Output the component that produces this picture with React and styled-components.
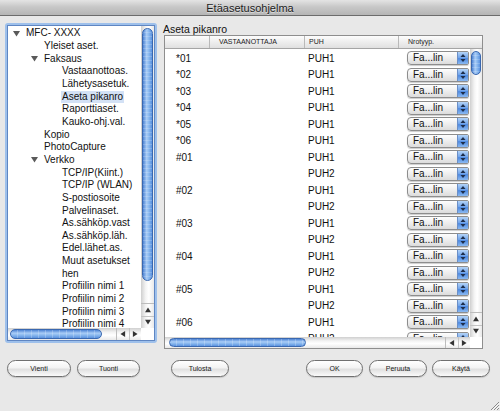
import React from "react"
import styled, { createGlobalStyle } from "styled-components"

const GlobalStyle = createGlobalStyle`
  body {
    margin: 0;
    font-family: "Liberation Sans", Arial, sans-serif;
    color: #111;
  }
`

const treeData = [
  { label: "MFC- XXXX", level: 0, open: true },
  { label: "Yleiset aset.", level: 1 },
  { label: "Faksaus", level: 1, open: true },
  { label: "Vastaanottoas.", level: 2 },
  { label: "Lähetysasetuk.", level: 2 },
  { label: "Aseta pikanro", level: 2, selected: true },
  { label: "Raporttiaset.", level: 2 },
  { label: "Kauko-ohj.val.", level: 2 },
  { label: "Kopio", level: 1 },
  { label: "PhotoCapture", level: 1 },
  { label: "Verkko", level: 1, open: true },
  { label: "TCP/IP(Kiint.)", level: 2 },
  { label: "TCP/IP (WLAN)", level: 2 },
  { label: "S-postiosoite", level: 2 },
  { label: "Palvelinaset.", level: 2 },
  { label: "As.sähköp.vast", level: 2 },
  { label: "As.sähköp.läh.", level: 2 },
  { label: "Edel.lähet.as.", level: 2 },
  { label: "Muut asetukset", level: 2 },
  { label: "hen", level: 2 },
  { label: "Profiilin nimi 1", level: 2 },
  { label: "Profiilin nimi 2", level: 2 },
  { label: "Profiilin nimi 3", level: 2 },
  { label: "Profiilin nimi 4", level: 2 },
]

const rows = [
  ["*01", "PUH1"],
  ["*02", "PUH1"],
  ["*03", "PUH1"],
  ["*04", "PUH1"],
  ["*05", "PUH1"],
  ["*06", "PUH1"],
  ["#01", "PUH1"],
  ["", "PUH2"],
  ["#02", "PUH1"],
  ["", "PUH2"],
  ["#03", "PUH1"],
  ["", "PUH2"],
  ["#04", "PUH1"],
  ["", "PUH2"],
  ["#05", "PUH1"],
  ["", "PUH2"],
  ["#06", "PUH1"],
  ["", "PUH2"],
]

const Tri = ({ dir = "down", size = 7, color = "#555" }) => {
  const pts = {
    down: "0,1 7,1 3.5,6.5",
    up: "0,6 7,6 3.5,0.5",
    left: "6,0 6,7 0.5,3.5",
    right: "1,0 1,7 6.5,3.5",
  }
  return (
    <svg width={size} height={size} viewBox="0 0 7 7">
      <polygon points={pts[dir]} fill={color} />
    </svg>
  )
}

const Stepper = () => (
  <StepBox>
    <svg width="6" height="10" viewBox="0 0 6 10">
      <polygon points="0.5,4 5.5,4 3,1" fill="#1d2d4a" />
      <polygon points="0.5,6 5.5,6 3,9" fill="#1d2d4a" />
    </svg>
  </StepBox>
)

const Grip = () => (
  <GripBox>
    <svg width="11" height="11" viewBox="0 0 11 11">
      <path d="M10 2 L2 10 M10 5 L5 10 M10 8 L8 10" stroke="#8a8a8a" strokeWidth="1" />
      <path d="M10.8 2.8 L2.8 10.8 M10.8 5.8 L5.8 10.8" stroke="#fff" strokeWidth="0.8" />
    </svg>
  </GripBox>
)

const VScrollBar = ({ thumbTop, thumbHeight }) => (
  <VScroll>
    <VTrack>
      <VThumb $top={thumbTop} $h={thumbHeight} />
    </VTrack>
    <VArrows>
      <ArrowCell>
        <Tri dir="up" size={6} color="#333" />
      </ArrowCell>
      <ArrowCell $sep>
        <Tri dir="down" size={6} color="#333" />
      </ArrowCell>
    </VArrows>
  </VScroll>
)

const HScrollBar = ({ thumbLeft, thumbWidth }) => (
  <HScroll>
    <HTrack>
      <HThumb $left={thumbLeft} $w={thumbWidth} />
    </HTrack>
    <HArrows>
      <ArrowCell>
        <Tri dir="left" size={6} color="#333" />
      </ArrowCell>
      <ArrowCell $sep $h>
        <Tri dir="right" size={6} color="#333" />
      </ArrowCell>
    </HArrows>
  </HScroll>
)

const App = () => {
  return (
    <>
      <GlobalStyle />
      <Window>
        <TitleBar>Etäasetusohjelma</TitleBar>
        <Main>
          <FocusRing>
            <TreeBox>
              <TreeList>
                {treeData.map((item, index) => (
                  <TreeItem key={index} $level={item.level}>
                    <Toggle>{item.open && <Tri dir="down" size={7} color="#5a5a5a" />}</Toggle>
                    <TreeLabel $selected={item.selected}>{item.label}</TreeLabel>
                  </TreeItem>
                ))}
              </TreeList>
              <VScrollBar thumbTop={2} thumbHeight={253} />
              <HScrollBar thumbLeft={2} thumbWidth={92} />
              <Corner />
            </TreeBox>
          </FocusRing>

          <RightCol>
            <SectionLabel>Aseta pikanro</SectionLabel>
            <TableFrame>
              <Header>
                <HeadCell $pl={0} />
                <HeadCell $pl={9} $divider>VASTAANOTTAJA</HeadCell>
                <HeadCell $pl={4} $divider>PUH</HeadCell>
                <HeadCell $pl={9} $divider>Nrotyyp.</HeadCell>
              </Header>
              <TableBody>
                <Rows>
                  {rows.map((r, index) => (
                    <Row key={index}>
                      <Cell $pl={11}>{r[0]}</Cell>
                      <Cell />
                      <Cell $pl={4}>{r[1]}</Cell>
                      <Cell $pl={9}>
                        <Select>
                          <SelectText>Fa...lin</SelectText>
                          <Stepper />
                        </Select>
                      </Cell>
                    </Row>
                  ))}
                </Rows>
                <VScrollBar thumbTop={2} thumbHeight={24} />
                <HScrollBar thumbLeft={4} thumbWidth={137} />
                <Corner />
              </TableBody>
            </TableFrame>
          </RightCol>
        </Main>

        <ButtonRow>
          <Button $w={64}>Vienti</Button>
          <Button $w={63} $ml={6}>Tuonti</Button>
          <Button $w={58} $ml={31}>Tulosta</Button>
          <Spacer />
          <Button $w={57}>OK</Button>
          <Button $w={58} $ml={6}>Peruuta</Button>
          <Button $w={58} $ml={5}>Käytä</Button>
        </ButtonRow>
        <Grip />
      </Window>
    </>
  )
}

export default App

const Window = styled.div`
  width: 500px;
  height: 411px;
  background: #e8e8e8;
  position: relative;
  overflow: hidden;
`

const TitleBar = styled.div`
  height: 15px;
  border-bottom: 1px solid #6c6c6c;
  background: linear-gradient(#e4e4e4, #c8c8c8 45%, #b5b5b5);
  display: flex;
  align-items: center;
  justify-content: center;
  font-size: 11px;
  color: #222;
  text-shadow: 0 1px 0 rgba(255, 255, 255, 0.5);
`

const Main = styled.div`
  display: flex;
  gap: 6px;
  padding: 7px 0 0 5px;
  height: 326px;
`

const FocusRing = styled.div`
  width: 152px;
  height: 320px;
  box-sizing: border-box;
  padding: 2px;
  border-radius: 3px;
  background: #9ec0eb;
`

const TreeBox = styled.div`
  height: 100%;
  box-sizing: border-box;
  border: 1px solid #5f86c2;
  background: #fff;
  display: grid;
  grid-template-columns: 1fr 13px;
  grid-template-rows: 1fr 12px;
  overflow: hidden;
`

const TreeList = styled.ul`
  list-style: none;
  margin: 0;
  padding: 1px 0 0;
  overflow: hidden;
  font-size: 10px;
`

const TreeItem = styled.li`
  display: flex;
  align-items: center;
  height: 12.67px;
  padding-left: ${(p) => 5 + 18 * p.$level}px;
  white-space: nowrap;
`

const Toggle = styled.span`
  width: 13px;
  flex: none;
  display: flex;
  align-items: center;
`

const TreeLabel = styled.span`
  line-height: 12px;
  padding: 0 1px;
  margin-left: -1px;
  background: ${(p) => (p.$selected ? "#d3e1f5" : "transparent")};
`

const VScroll = styled.div`
  display: flex;
  flex-direction: column;
  background: linear-gradient(to right, #cfcfcf, #f3f3f3 35%, #fff 60%, #e9e9e9);
  min-height: 0;
`

const VTrack = styled.div`
  flex: 1;
  min-height: 0;
`

const VThumb = styled.div`
  margin: ${(p) => p.$top}px 1px 0;
  height: ${(p) => p.$h}px;
  box-sizing: border-box;
  border: 1px solid #3a68b0;
  border-radius: 6px;
  background:
    repeating-linear-gradient(180deg, transparent 0 3px, rgba(255, 255, 255, 0.18) 3px 4px),
    linear-gradient(to right, #4c83d4, #a9ccf6 40%, #8fbcf0 60%, #5a92df);
`

const VArrows = styled.div`
  height: 24px;
  display: flex;
  flex-direction: column;
  border-top: 1px solid #bdbdbd;
`

const ArrowCell = styled.div`
  flex: 1;
  display: flex;
  align-items: center;
  justify-content: center;
  ${(p) => p.$sep && (p.$h ? "border-left: 1px solid #c4c4c4;" : "border-top: 1px solid #c4c4c4;")}
`

const HScroll = styled.div`
  display: flex;
  background: linear-gradient(#cfcfcf, #f3f3f3 35%, #fff 60%, #e9e9e9);
  min-width: 0;
`

const HTrack = styled.div`
  flex: 1;
  display: flex;
  align-items: center;
  min-width: 0;
`

const HThumb = styled.div`
  margin-left: ${(p) => p.$left}px;
  width: ${(p) => p.$w}px;
  height: calc(100% - 2px);
  box-sizing: border-box;
  border: 1px solid #3a68b0;
  border-radius: 6px;
  background:
    repeating-linear-gradient(90deg, transparent 0 6px, rgba(255, 255, 255, 0.22) 6px 7px),
    linear-gradient(#4c83d4, #a9ccf6 40%, #8fbcf0 60%, #5a92df);
`

const HArrows = styled.div`
  width: 24px;
  display: flex;
  border-left: 1px solid #bdbdbd;
`

const Corner = styled.div`
  background: #fff;
`

const RightCol = styled.div`
  display: flex;
  flex-direction: column;
`

const SectionLabel = styled.div`
  height: 12px;
  line-height: 12px;
  font-size: 10.5px;
`

const TableFrame = styled.div`
  margin-left: 1px;
  width: 319px;
  height: 314px;
  box-sizing: border-box;
  border: 1px solid #8e8e8e;
  background: #fff;
  display: flex;
  flex-direction: column;
`

const Header = styled.div`
  display: grid;
  grid-template-columns: 44px 95px 94px 1fr;
  height: 13px;
  flex: none;
  box-sizing: border-box;
  border-bottom: 1px solid #a5a5a5;
  background: linear-gradient(#fdfdfd, #eeeeee 50%, #e0e0e0);
  font-size: 7px;
  color: #222;
`

const HeadCell = styled.div`
  line-height: 12px;
  padding-left: ${(p) => p.$pl}px;
  border-left: ${(p) => (p.$divider ? "1px solid #b9b9b9" : "none")};
  white-space: nowrap;
`

const TableBody = styled.div`
  flex: 1;
  min-height: 0;
  display: grid;
  grid-template-columns: 1fr 12px;
  grid-template-rows: 1fr 11px;
`

const Rows = styled.div`
  overflow: hidden;
  padding-top: 1px;
  min-height: 0;
`

const Row = styled.div`
  display: grid;
  grid-template-columns: 44px 95px 94px 1fr;
  height: 16.5px;
  align-items: center;
  font-size: 10px;
`

const Cell = styled.div`
  padding-left: ${(p) => p.$pl || 0}px;
  white-space: nowrap;
  display: flex;
  align-items: center;
`

const Select = styled.div`
  width: 62px;
  height: 14px;
  box-sizing: border-box;
  display: flex;
  border: 1px solid #8d8d8d;
  border-radius: 4px 2px 2px 4px;
  background: linear-gradient(#fefefe, #eeeeee 50%, #dcdcdc);
  box-shadow: 0 1px 1px rgba(0, 0, 0, 0.2);
  overflow: hidden;
`

const SelectText = styled.span`
  flex: 1;
  padding-left: 5px;
  line-height: 12px;
  font-size: 10px;
`

const StepBox = styled.span`
  width: 10px;
  display: flex;
  align-items: center;
  justify-content: center;
  border-left: 1px solid #6b8fc7;
  background: linear-gradient(#b4d4f8, #6ea2ea 50%, #4f8ae0 55%, #8ab9f2);
`

const ButtonRow = styled.div`
  display: flex;
  padding: 11px 10px 0 7px;
`

const Spacer = styled.div`
  flex: 1;
`

const Button = styled.button`
  width: ${(p) => p.$w}px;
  height: 17px;
  margin-left: ${(p) => p.$ml || 0}px;
  padding: 0;
  border: 1px solid #707070;
  border-radius: 9px;
  background: linear-gradient(#ffffff, #f3f3f3 45%, #e0e0e0 55%, #fafafa);
  box-shadow: 0 1px 1px rgba(0, 0, 0, 0.15);
  font-family: inherit;
  font-size: 7px;
  color: #222;
`

const GripBox = styled.div`
  position: absolute;
  right: 0;
  bottom: 0;
  width: 11px;
  height: 11px;
  line-height: 0;
`
